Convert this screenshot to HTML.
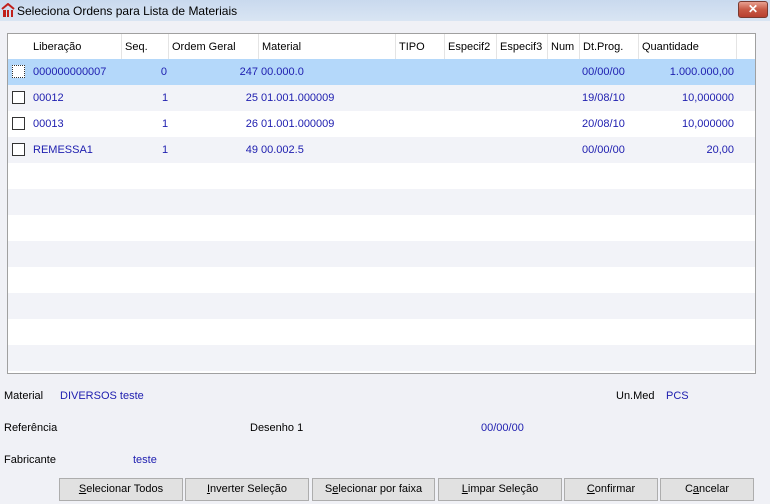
<!DOCTYPE html>
<html><head><style>
*{margin:0;padding:0;box-sizing:border-box}
body{width:770px;height:504px;background:#f0f1f6;font-family:"Liberation Sans",sans-serif;font-size:11px;color:#000;position:relative;overflow:hidden}
.title{position:absolute;left:0;top:0;width:770px;height:21px;background:linear-gradient(#c9d9ee,#d9e5f3);}
.title span{position:absolute;left:17px;top:4px;font-size:12px;color:#000}
.close{position:absolute;left:738px;top:1px;width:30px;height:17px;border:1px solid #7a3a30;border-radius:3px;background:linear-gradient(#e8a090,#c85a45 50%,#b84030);color:#fff;font-weight:bold;font-size:12px;text-align:center;line-height:15px}
.grid{position:absolute;left:7px;top:33px;width:749px;height:341px;border:1px solid #a0a0a0;background:#fff;overflow:hidden}
.row{position:absolute;left:0;width:747px;height:26px}
.c{position:absolute;top:0;height:26px;line-height:26px;white-space:nowrap;color:#2020b0}
.h .c{color:#000;border-right:1px solid #e4e4e4;padding-left:3px}
.cb{position:absolute;left:4px;top:6px;width:13px;height:13px;border:1px solid #333;background:#fff}
.r{text-align:right}
.lbl{position:absolute;color:#000}
.blue{position:absolute;color:#2020b0}
.btn{position:absolute;top:478px;height:23px;border:1px solid #adadad;background:#e1e1e1;text-align:center;line-height:21px;font-size:11px}
</style></head><body>
<div class="title"><svg style="position:absolute;left:1px;top:3px" width="14" height="15"><path d="M1 6 L7 1 L13 6" stroke="#c0201c" stroke-width="2" fill="none"/><rect x="2" y="7" width="3" height="7" fill="#c0201c"/><rect x="6" y="7" width="2" height="7" fill="#c0201c"/><rect x="10" y="7" width="2" height="7" fill="#c0201c"/></svg><span>Seleciona Ordens para Lista de Materiais</span></div>
<div class="close">✕</div>
<div class="grid">
<div class="row h" style="top:0;height:25px">
<div class="c" style="left:22px;width:92px;height:25px">Liberação</div>
<div class="c" style="left:114px;width:47px;height:25px">Seq.</div>
<div class="c" style="left:161px;width:90px;height:25px">Ordem Geral</div>
<div class="c" style="left:251px;width:137px;height:25px">Material</div>
<div class="c" style="left:388px;width:49px;height:25px">TIPO</div>
<div class="c" style="left:437px;width:52px;height:25px">Especif2</div>
<div class="c" style="left:489px;width:51px;height:25px">Especif3</div>
<div class="c" style="left:540px;width:32px;height:25px">Num</div>
<div class="c" style="left:572px;width:59px;height:25px">Dt.Prog.</div>
<div class="c" style="left:631px;width:98px;height:25px">Quantidade</div>
</div>
<div class="row" style="top:25px;background:#b4d8fa"><div class="cb" style="border-style:dotted"></div><div class="c" style="left:25px">000000000007</div><div class="c r" style="left:114px;width:45px">0</div><div class="c r" style="left:161px;width:89px">247</div><div class="c" style="left:253px">00.000.0</div><div class="c" style="left:574px">00/00/00</div><div class="c r" style="left:631px;width:95px">1.000.000,00</div></div>
<div class="row" style="top:51px;background:#f2f3f8"><div class="cb"></div><div class="c" style="left:25px">00012</div><div class="c r" style="left:114px;width:45px;text-align:left;padding-left:40px">1</div><div class="c r" style="left:161px;width:89px">25</div><div class="c" style="left:253px">01.001.000009</div><div class="c" style="left:574px">19/08/10</div><div class="c r" style="left:631px;width:95px">10,000000</div></div>
<div class="row" style="top:77px;background:#fff"><div class="cb"></div><div class="c" style="left:25px">00013</div><div class="c" style="left:154px">1</div><div class="c r" style="left:161px;width:89px">26</div><div class="c" style="left:253px">01.001.000009</div><div class="c" style="left:574px">20/08/10</div><div class="c r" style="left:631px;width:95px">10,000000</div></div>
<div class="row" style="top:103px;background:#f2f3f8"><div class="cb"></div><div class="c" style="left:25px">REMESSA1</div><div class="c" style="left:154px">1</div><div class="c r" style="left:161px;width:89px">49</div><div class="c" style="left:253px">00.002.5</div><div class="c" style="left:574px">00/00/00</div><div class="c r" style="left:631px;width:95px">20,00</div></div>
<div class="row" style="top:155px;background:#f2f3f8"></div>
<div class="row" style="top:207px;background:#f2f3f8"></div>
<div class="row" style="top:259px;background:#f2f3f8"></div>
<div class="row" style="top:311px;background:#f2f3f8"></div>
</div>
<div class="lbl" style="left:4px;top:390px">Material</div>
<div class="blue" style="left:60px;top:390px">DIVERSOS teste</div>
<div class="lbl" style="left:616px;top:390px">Un.Med</div>
<div class="blue" style="left:666px;top:390px">PCS</div>
<div class="lbl" style="left:4px;top:422px">Referência</div>
<div class="lbl" style="left:250px;top:422px">Desenho 1</div>
<div class="blue" style="left:481px;top:422px">00/00/00</div>
<div class="lbl" style="left:4px;top:454px">Fabricante</div>
<div class="blue" style="left:133px;top:454px">teste</div>
<div class="btn" style="left:59px;width:124px"><u>S</u>elecionar Todos</div>
<div class="btn" style="left:185px;width:124px"><u>I</u>nverter Seleção</div>
<div class="btn" style="left:312px;width:123px">S<u>e</u>lecionar por faixa</div>
<div class="btn" style="left:438px;width:124px"><u>L</u>impar Seleção</div>
<div class="btn" style="left:564px;width:94px"><u>C</u>onfirmar</div>
<div class="btn" style="left:660px;width:94px">C<u>a</u>ncelar</div>
</body></html>
